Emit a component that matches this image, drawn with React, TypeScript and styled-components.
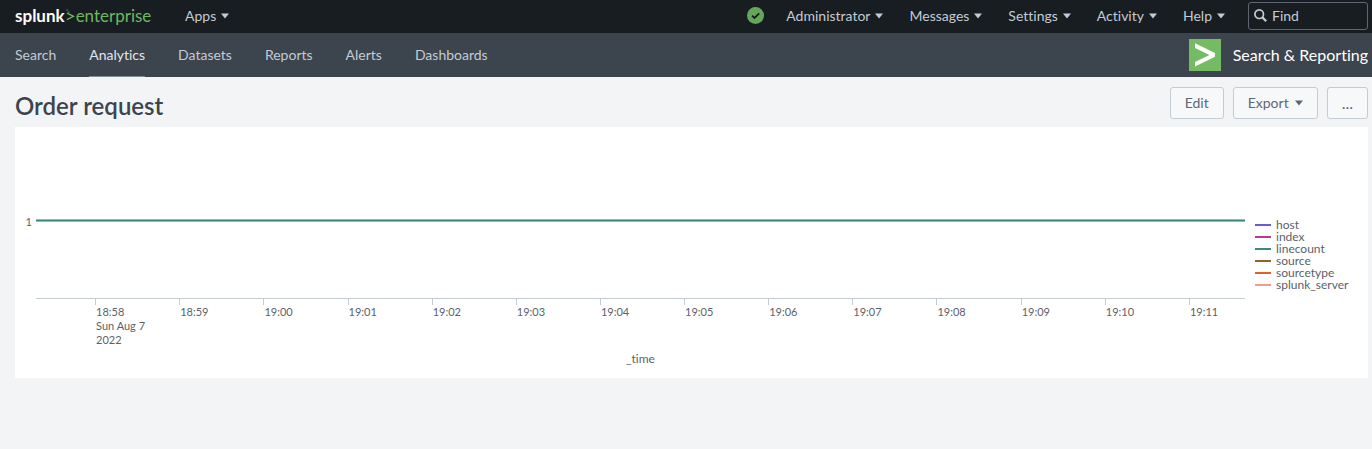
import React from 'react';
import styled, { createGlobalStyle } from 'styled-components';

const GlobalStyle = createGlobalStyle`
  *, *::before, *::after { box-sizing: border-box; }
  body {
    margin: 0;
    background: #f2f4f5;
    color: #3c444d;
    font-family: Lato, "Liberation Sans", sans-serif;
    font-size: 14px;
    font-variant-ligatures: none;
    line-height: 20px;
  }
  button, input { font: inherit; font-variant-ligatures: none; }
`;

const TopBar = styled.header`
  display: flex;
  align-items: center;
  height: 33px;
  padding: 0 4px 2px 15px;
  background: #171d21;
  color: #c3cbd4;
`;

const Brand = styled.a`
  display: flex;
  align-items: center;
  width: 136px;
  margin-right: 34px;
  color: #ffffff;
  font-size: 17px;
  font-weight: 700;
  text-decoration: none;
`;

const BrandMark = styled.svg`
  flex: none;
  margin: 0 1px;
`;

const BrandSuffix = styled.span`
  color: #6db85f;
  font-weight: 400;
`;

const MenuButton = styled.button`
  display: flex;
  align-items: center;
  gap: 5px;
  padding: 0;
  border: 0;
  background: none;
  color: inherit;
  white-space: nowrap;
  cursor: pointer;
`;

const TopMenus = styled.nav`
  display: flex;
  align-items: center;
  gap: 26px;
  margin-left: auto;
`;

const StatusButton = styled.button`
  display: flex;
  padding: 0;
  margin-right: -4px;
  border: 0;
  background: none;
`;

const FindBox = styled.label`
  display: flex;
  align-items: center;
  gap: 5px;
  width: 120px;
  height: 28px;
  margin-left: 23px;
  padding: 0 5px;
  border: 1px solid #5c6773;
  border-radius: 3px;
`;

const SearchIcon = styled.svg`
  flex: none;
`;

const FindInput = styled.input`
  width: 100%;
  min-width: 0;
  padding: 0;
  border: 0;
  outline: 0;
  background: none;
  color: #c3cbd4;
  &::placeholder { color: #c3cbd4; opacity: 1; }
`;

const AppBar = styled.div`
  display: flex;
  justify-content: space-between;
  height: 44px;
  padding: 0 4px 0 15px;
  background: #3c444d;
`;

const AppNav = styled.nav`
  display: flex;
  gap: 33px;
`;

const AppLink = styled.a<{ $active?: boolean }>`
  display: flex;
  align-items: center;
  border-bottom: 1px solid ${p => (p.$active ? '#818d99' : 'transparent')};
  color: ${p => (p.$active ? '#e1e6eb' : '#c3cbd4')};
  text-decoration: none;
`;

const AppIdentity = styled.a`
  display: flex;
  align-items: center;
  gap: 12px;
  color: #ffffff;
  font-size: 16px;
  text-decoration: none;
`;

const PageHead = styled.div`
  display: flex;
  align-items: flex-start;
  justify-content: space-between;
  height: 50px;
  padding: 10px 4px 0 15px;
`;

const Title = styled.h1`
  margin: 3px 0 0;
  font-size: 24px;
  font-weight: 600;
  line-height: 32px;
`;

const Actions = styled.div`
  display: flex;
  gap: 9px;
`;

const ActionButton = styled.button<{ $large?: boolean }>`
  display: flex;
  align-items: center;
  gap: 6px;
  height: 32px;
  padding: 0 14px;
  border: 1px solid #c3cbd4;
  border-radius: 3px;
  background: #f7f8fa;
  color: #5c6773;
  font-size: ${p => (p.$large ? 16 : 14)}px;
  cursor: pointer;
`;

const Panel = styled.section`
  display: flex;
  margin: 0 4px 0 15px;
  padding-bottom: 12px;
  background: #ffffff;
  color: #5c5f6b;
  font-size: 11px;
  line-height: 14px;
`;

const YAxis = styled.div`
  display: flex;
  justify-content: flex-end;
  width: 21px;
  padding: 88px 4px 0 0;
`;

const Chart = styled.div`
  flex: 1;
  min-width: 0;
`;

const Plot = styled.div`
  height: 172px;
  padding-top: 92px;
  border-bottom: 1px solid #c3cbd4;
`;

const SeriesLine = styled.div`
  height: 3px;
  border: solid #8cbdb1;
  border-width: 1px 0;
  background: #3c8a7c;
`;

const TimeAxis = styled.div`
  display: grid;
  grid-template-columns: 59fr repeat(13, 84fr) 56fr;
  height: 53px;
`;

const Tick = styled.div`
  height: 5px;
  padding-top: 6px;
  border-left: 1px solid #c3cbd4;
  white-space: nowrap;
  &:first-child { grid-column-start: 2; }
`;

const AxisTitle = styled.div`
  font-size: 12px;
  text-align: center;
`;

const Legend = styled.ul`
  width: 123px;
  margin: 92px 0 0;
  padding: 0 0 0 10px;
  list-style: none;
  font-size: 12px;
  line-height: 12px;
`;

const LegendItem = styled.li`
  display: flex;
  align-items: center;
  gap: 5px;
`;

const Swatch = styled.span<{ $color: string }>`
  width: 16px;
  height: 2px;
  background: ${p => p.$color};
`;

const Caret = () => (
  <svg width="8" height="6" viewBox="0 0 8 6" aria-hidden="true">
    <path d="M0 .5h8L4 5.5z" fill="currentColor" />
  </svg>
);

const menus = ['Administrator', 'Messages', 'Settings', 'Activity', 'Help'];
const sections = ['Search', 'Analytics', 'Datasets', 'Reports', 'Alerts', 'Dashboards'];
const times = [
  '18:58', '18:59', '19:00', '19:01', '19:02', '19:03', '19:04',
  '19:05', '19:06', '19:07', '19:08', '19:09', '19:10', '19:11',
];
const series = [
  { name: 'host', color: '#7158d0' },
  { name: 'index', color: '#b83a92' },
  { name: 'linecount', color: '#3c8a7c' },
  { name: 'source', color: '#926322' },
  { name: 'sourcetype', color: '#dd632c' },
  { name: 'splunk_server', color: '#f19a98' },
];

export default function App() {
  return (
    <>
      <GlobalStyle />
      <TopBar>
        <Brand href="#">
          splunk
          <BrandMark width="9" height="13" viewBox="0 0 9 13" aria-hidden="true">
            <path d="M1 4.2 7.6 7.3 1 10.6" fill="none" stroke="#6db85f" strokeWidth="1.3" />
            <path d="M.5 .5h1.3v1.3H.5zM2.2 2.2h1.2v1.2H2.2z" fill="#5a9a50" />
          </BrandMark>
          <BrandSuffix>enterprise</BrandSuffix>
        </Brand>
        <MenuButton>Apps<Caret /></MenuButton>
        <TopMenus>
          <StatusButton aria-label="Health status">
            <svg width="17" height="17" viewBox="0 0 17 17" aria-hidden="true">
              <circle cx="8.5" cy="8.5" r="8.5" fill="#65a659" />
              <path d="m5 8.7 2.5 2.3 4.7-4.6" fill="none" stroke="#171d21" strokeWidth="1.8" />
            </svg>
          </StatusButton>
          {menus.map(m => <MenuButton key={m}>{m}<Caret /></MenuButton>)}
        </TopMenus>
        <FindBox>
          <SearchIcon width="13" height="13" viewBox="0 0 13 13" aria-hidden="true">
            <circle cx="5.2" cy="5.2" r="4.3" fill="none" stroke="currentColor" strokeWidth="1.7" />
            <path d="m8.4 8.4 3.8 3.8" stroke="currentColor" strokeWidth="2.2" />
          </SearchIcon>
          <FindInput type="text" placeholder="Find" aria-label="Find" />
        </FindBox>
      </TopBar>
      <AppBar>
        <AppNav>
          {sections.map(s => (
            <AppLink key={s} href="#" $active={s === 'Analytics'}>{s}</AppLink>
          ))}
        </AppNav>
        <AppIdentity href="#">
          <svg width="32" height="32" viewBox="0 0 32 32" aria-hidden="true">
            <path d="M0 0h32v32H0z" fill="#74bb64" />
            <path d="M6 4.2 26 14v3.8L6 27.5v-4.6L20.5 16 6 9.1z" fill="#fff" />
          </svg>
          Search &amp; Reporting
        </AppIdentity>
      </AppBar>
      <main>
        <PageHead>
          <Title>Order request</Title>
          <Actions>
            <ActionButton>Edit</ActionButton>
            <ActionButton>Export<Caret /></ActionButton>
            <ActionButton $large aria-label="More actions">...</ActionButton>
          </Actions>
        </PageHead>
        <Panel>
          <YAxis>1</YAxis>
          <Chart>
            <Plot><SeriesLine /></Plot>
            <TimeAxis>
              {times.map((t, i) => (
                <Tick key={t}>
                  {t}
                  {i === 0 && <><br />Sun Aug 7<br />2022</>}
                </Tick>
              ))}
            </TimeAxis>
            <AxisTitle>_time</AxisTitle>
          </Chart>
          <Legend>
            {series.map(s => (
              <LegendItem key={s.name}><Swatch $color={s.color} />{s.name}</LegendItem>
            ))}
          </Legend>
        </Panel>
      </main>
    </>
  );
}
